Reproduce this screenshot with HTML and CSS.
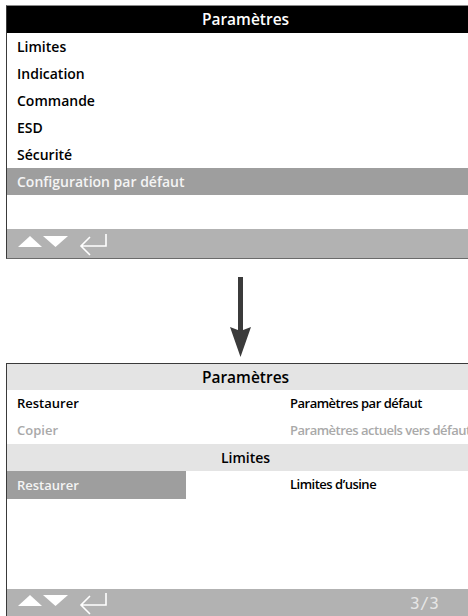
FILE: index.html
```html
<!DOCTYPE html>
<html lang="fr">
<head>
    <meta charset="UTF-8">
    <meta name="viewport" content="width=device-width, initial-scale=1.0">
    <title>Paramètres</title>

    <link rel="stylesheet" href="styles.css">
</head>
<body>

    <!-- écran 1 : menu des paramètres -->
    <div class="Screen Screen--menu">
        <div class="Screen__head">Paramètres</div>

        <div class="Screen__list">
            <div class="Screen__row">Limites</div>
            <div class="Screen__row">Indication</div>
            <div class="Screen__row">Commande</div>
            <div class="Screen__row">ESD</div>
            <div class="Screen__row">Sécurité</div>
            <div class="Screen__row Screen__row--active">Configuration par défaut</div>
        </div>

        <div class="Screen__foot">
            <svg class="Screen__keys" width="100" height="29" viewBox="0 0 100 29">
                <polygon points="11,18 35,18 23,7" fill="#fff"/>
                <polygon points="36,7 61,7 48.5,18" fill="#fff"/>
                <path d="M99 5 V17 H74 M83 8 L74 17 L83 26" fill="none" stroke="#fff" stroke-width="1.6"/>
            </svg>
        </div>
    </div>

    <!-- flèche de transition -->
    <div class="Arrow">
        <svg width="24" height="104" viewBox="0 0 24 104">
            <rect x="9" y="18" width="5" height="56" fill="#3b3b3b"/>
            <path d="M1 68 L11.5 98 L22 68 L11.5 72 Z" fill="#3b3b3b"/>
        </svg>
    </div>

    <!-- écran 2 : configuration par défaut -->
    <div class="Screen Screen--table">
        <div class="Screen__head Screen__head--light">Paramètres</div>

        <div class="Screen__grid">
            <div class="Screen__cell">Restaurer</div>
            <div class="Screen__cell Screen__cell--value">Paramètres par défaut</div>

            <div class="Screen__cell Screen__cell--off">Copier</div>
            <div class="Screen__cell Screen__cell--value Screen__cell--off">Paramètres actuels vers défaut</div>

            <div class="Screen__sub">Limites</div>

            <div class="Screen__cell Screen__cell--active">Restaurer</div>
            <div class="Screen__cell Screen__cell--value">Limites d’usine</div>
        </div>

        <div class="Screen__foot">
            <svg class="Screen__keys" width="100" height="29" viewBox="0 0 100 29">
                <polygon points="11,17 35,17 23,6" fill="#fff"/>
                <polygon points="36,6 61,6 48.5,17" fill="#fff"/>
                <path d="M99 4 V16 H74 M83 7 L74 16 L83 25" fill="none" stroke="#fff" stroke-width="1.6"/>
            </svg>
            <span class="Screen__page">3/3</span>
        </div>
    </div>

</body>
</html>
```

FILE: styles.css
```css
* {
    box-sizing: border-box;
}

body {
    margin: 0;
    padding: 5px 0 0 6px;
    width: 468px;
    height: 616px;
    overflow: hidden;
    background: #fff;
    font-family: 'Open Sans', 'Noto Sans', sans-serif;
    font-weight: 600;
    font-size: 13px;
    color: #000;
}

.Screen {
    width: 478px;
    border: 1px solid #3a3a3a;
    border-right: none;
}

.Screen--menu {
    border-top-color: #8a8a8a;
    border-bottom-color: #6a6a6a;
}

.Screen__head {
    height: 27px;
    line-height: 27px;
    text-align: center;
    background: #000;
    color: #fff;
    font-size: 15.5px;
}

.Screen__head--light {
    height: 26px;
    line-height: 26px;
    background: #e4e4e4;
    color: #000;
}

.Screen__list {
    height: 196px;
}

.Screen__row {
    height: 27px;
    line-height: 27px;
    padding-left: 10px;
    font-size: 14px;
}

.Screen__row--active {
    background: #9e9e9e;
    color: #f4f4f4;
}

.Screen__foot {
    display: flex;
    align-items: center;
    height: 29px;
    background: #b2b2b2;
}

.Screen__keys {
    display: block;
}

.Screen__page {
    margin-left: auto;
    margin-right: 45px;
    font-family: 'DejaVu Sans Mono', monospace;
    font-weight: normal;
    font-size: 16px;
    color: #e6e6e6;
}

.Arrow {
    height: 104px;
    padding-left: 223px;
}

.Arrow svg {
    display: block;
}

.Screen__grid {
    display: grid;
    grid-template-columns: 179px 1fr;
    height: 199px;
    align-content: start;
}

.Screen__cell {
    height: 27px;
    line-height: 27px;
    padding-left: 10px;
    white-space: nowrap;
}

.Screen__cell--value {
    padding-left: 104px;
    letter-spacing: -0.5px;
}

.Screen__cell--off {
    color: #a9a9a9;
}

.Screen__cell--active {
    height: 28px;
    line-height: 28px;
    background: #9e9e9e;
    color: #f4f4f4;
}

.Screen__sub {
    grid-column: 1 / -1;
    height: 27px;
    line-height: 27px;
    text-align: center;
    font-size: 14px;
    background: #e4e4e4;
}
```
